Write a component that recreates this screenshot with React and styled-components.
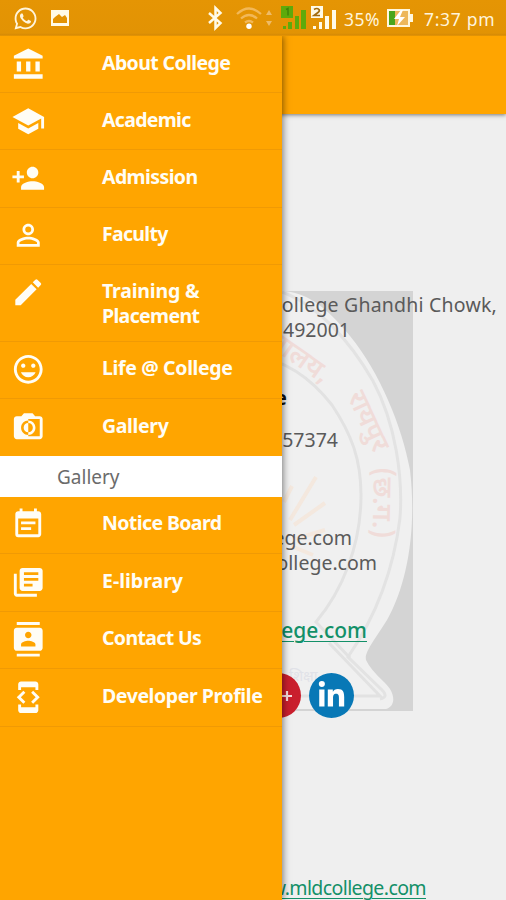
import React from 'react'
import styled, { createGlobalStyle } from 'styled-components'
import {
  MdAccountBalance, MdSchool, MdPersonAdd, MdPersonOutline, MdEdit, MdTagFaces,
  MdMonochromePhotos, MdEventNote, MdLibraryBooks, MdContacts, MdDeveloperMode,
} from 'react-icons/md'
import { FaWhatsapp, FaLinkedinIn } from 'react-icons/fa'

const GlobalStyle = createGlobalStyle`
    * {
        box-sizing: border-box;
    }

    body {
        margin: 0;
        background: #efefef;
        font-family: "Noto Sans", "Open Sans", sans-serif;
    }
`

const Screen = styled.div`
    position: relative;
    width: 506px;
    height: 900px;
    overflow: hidden;
    background: #efefef;
`

const StatusBar = styled.div`
    position: relative;
    z-index: 3;
    height: 36px;
    display: flex;
    justify-content: space-between;
    background: linear-gradient(#e59504 0, #e29304 33px, #d58a06 35px, #ee9b02 36px);
    color: #fff4dc;
`

const Notifications = styled.div`
    display: flex;
    align-items: center;
    gap: 12px;
    padding-left: 13px;
`

const StatusIcons = styled.svg`
    display: block;
    width: 140px;
    height: 36px;
`

const StatusRight = styled.div`
    display: flex;
    align-items: center;
    padding-right: 9px;
    line-height: 36px;
`

const StatusText = styled.span`
    font-size: 17.5px;
    width: ${(props) => props.$width}px;
    margin-left: ${(props) => props.$left || 0}px;
    letter-spacing: ${(props) => props.$spacing || 0}px;
    white-space: nowrap;
    padding-top: 2px;
`

const Drawer = styled.nav`
    position: absolute;
    z-index: 2;
    top: 36px;
    left: 0;
    width: 282px;
    height: 864px;
    background: #ffa500;
    box-shadow: 1px 0 7px rgba(0, 0, 0, 0.5);
`

const MenuItem = styled.div`
    display: flex;
    align-items: flex-start;
    height: ${(props) => props.$height || 57.2}px;
    padding: 10.5px 0 0 11px;
    border-bottom: ${(props) => (props.$open ? 'none' : '1px solid #f09a04')};
    color: #fffdf5;

    svg {
        flex: none;
        width: 34.5px;
        height: 34.5px;
    }
`

const MenuLabel = styled.span`
    margin: 3.2px 0 0 56.5px;
    font-size: 19.5px;
    font-weight: 700;
    line-height: 25px;
    white-space: nowrap;
`

const LabelLine = styled.span`
    display: block;
    letter-spacing: ${(props) => props.$spacing}px;
`

const SubItem = styled.div`
    height: 40.5px;
    padding: 1px 0 0 57px;
    background: #fff;
    color: #6b6b6b;
    font-size: 19px;
    line-height: 40px;
`

const AppBar = styled.header`
    position: relative;
    height: 78px;
    background: #ffa500;
    box-shadow: 0 1px 4px rgba(0, 0, 0, 0.5);
`

const Watermark = styled.svg`
    position: absolute;
    left: 240px;
    top: 291px;
`

const Contact = styled.main`
    position: relative;
    display: flex;
    flex-direction: column;
    height: 786px;
    padding-top: 178px;
`

const Line = styled.div`
    width: ${(props) => props.$end}px;
    margin-top: ${(props) => props.$gap || 0}px;
    text-align: right;
    white-space: nowrap;
    font-size: 19.5px;
    line-height: 25px;
    font-weight: ${(props) => (props.$bold ? 700 : 400)};
    color: ${(props) => (props.$bold ? '#111' : '#5a5a5a')};
    letter-spacing: ${(props) => props.$spacing || 0}px;
`

const SiteLink = styled.a`
    color: #139068;
    font-weight: ${(props) => (props.$strong ? 500 : 400)};
    font-size: ${(props) => props.$size}px;
    text-decoration: underline;
    text-decoration-thickness: 1px;
    text-underline-offset: 3px;
`

const SocialRow = styled.div`
    display: flex;
    gap: 8px;
    margin-top: 30px;
    padding-left: 256px;
`

const SocialButton = styled.div`
    display: flex;
    align-items: center;
    justify-content: ${(props) => props.$justify || 'center'};
    width: 45px;
    height: 45px;
    padding-right: ${(props) => (props.$justify ? 8 : 0)}px;
    border-radius: 50%;
    background: ${(props) => props.$color};
    color: #fff;
`

const menu = [
  { icon: MdAccountBalance, label: [['About College', -0.6]] },
  { icon: MdSchool, label: [['Academic', -0.7]] },
  { icon: MdPersonAdd, label: [['Admission', -0.6]] },
  { icon: MdPersonOutline, label: [['Faculty', -0.7]] },
  { icon: MdEdit, label: [['Training &', -0.2], ['Placement', -0.65]], height: 77 },
  { icon: MdTagFaces, label: [['Life @ College', -0.35]] },
  { icon: MdMonochromePhotos, label: [['Gallery', -0.35]], children: ['Gallery'] },
  { icon: MdEventNote, label: [['Notice Board', -0.6]], height: 57.5 },
  { icon: MdLibraryBooks, label: [['E-library', 0]], height: 57.5 },
  { icon: MdContacts, label: [['Contact Us', -0.65]], height: 57.5 },
  { icon: MdDeveloperMode, label: [['Developer Profile', -0.42]], height: 57.5 },
]

const PictureIcon = () => (
  <svg width="20" height="16" viewBox="0 0 20 16">
    <path fillRule="evenodd" fill="#fffbe8" d="M1 0h18v16H1zM3 13h14V8l-2-3-3 2-3-3-4 3-2 2z" />
  </svg>
)

const SystemIcons = () => (
  <StatusIcons viewBox="202 0 140 36">
    <path d="M209 13l11.500 10-5 5V8l5 5-11.500 10" fill="none" stroke="#fffbe8" strokeWidth="2.500" />
    <g fill="none" stroke="#f2b858" strokeWidth="2.300">
      <path d="M237 14q12-11 24 0M241 18.500q8-7 16 0M245 22.500q4-3 8 0" />
    </g>
    <circle cx="249" cy="26.300" r="2.700" fill="#fff" />
    <path d="M266 15l3-5 3 5zM266 21l3 5 3-5z" fill="#eebb67" />
    <path d="M281 6h12v12h-12zM283 26h3v3h-3zM288 22h4v7h-4zM295 16h4v13h-4zM301 10h5v19h-5z" fill="#5eaa0b" />
    <path d="M286 9.500l2-1v7" stroke="#418409" strokeWidth="1.500" fill="none" />
    <path d="M311 6h12v12h-12zM313 26h3v3h-3zM319 22h3v7h-3zM325 16h4v13h-4zM332 10h4v19h-4z" fill="#fffbe8" />
    <path d="M314 9.500q3-2 5 0 1 1.500-1 3l-4 3h6" stroke="#a36d10" strokeWidth="1.700" fill="none" />
  </StatusIcons>
)

const Battery = () => (
  <svg width="28" height="20" viewBox="0 0 28 20">
    <path d="M1 1h23v5h3v8h-3v5H1z" fill="#fff7dd" />
    <path d="M3 3h6v14H3z" fill="#49a51a" />
    <path d="M9 3h13v14H9z" fill="#edb75b" />
    <path d="M15 2L8 11h5l-2 7 8-9h-5l3-7z" fill="#fff" />
  </svg>
)

const Plus = () => (
  <svg width="12" height="12" viewBox="0 0 12 12">
    <path d="M6 1v10M1 6h10" stroke="#f6dcdc" strokeWidth="2.200" />
  </svg>
)

const Seal = () => (
  <Watermark width="173" height="420" viewBox="240 291 173 420">
    <path d="M240 291h173v420H240z" fill="#d4d4d4" />
    <path
      d="M240 291h45C310 294 328 309 350 336C380 373 402 426 410 470C417 530 407 585 387 620C376 638 364 652 366 660Q370 669 384 682C396 693 396 706 386 709H240z"
      fill="#f0f0f0"
    />
    <path
      d="M282 292C318 305 350 341 373 381C396 424 403 478 400 518C393 575 372 622 348 657L382 690Q389 697 380 699"
      fill="none" stroke="#e3e3e3" strokeWidth="3"
    />
    <path
      d="M240 355C282 355 311 378 332 405C352 435 361 460 361 495C361 546 342 591 316 622L350 658M329 643L380 696H282"
      fill="none" stroke="#e2e2e2" strokeWidth="3"
    />
    <path d="M284 502l8-16M290 520l26-43M294 525l31-22M295 539l30-9M291 546l22 9" stroke="#f4e8de" strokeWidth="4" />
    <g fill="#f0dcd9" fontSize="27" fontWeight="600" fontFamily='"Noto Sans Devanagari", "Noto Sans", sans-serif'>
      <text transform="translate(267 345) rotate(35)">यालय,</text>
      <text transform="translate(347 396) rotate(65)">रायपुर</text>
      <text transform="translate(374 467) rotate(91)">(छ.ग.)</text>
    </g>
    <text x="289" y="681" fill="#e1e2e8" fontSize="15">शिक्षा</text>
  </Watermark>
)

const App = () => {
  return (
    <Screen>
      <GlobalStyle />
      <StatusBar>
        <Notifications>
          <FaWhatsapp size={25} />
          <PictureIcon />
        </Notifications>
        <StatusRight>
          <SystemIcons />
          <StatusText $width={42} $left={2} $spacing={0.5}>35%</StatusText>
          <Battery />
          <StatusText $width={73} $left={10} $spacing={0.7}>7:37 pm</StatusText>
        </StatusRight>
      </StatusBar>

      <Drawer>
        {menu.map(({ icon: Icon, label, height, children }) => (
          <React.Fragment key={label[0][0]}>
            <MenuItem $height={height} $open={Boolean(children)}>
              <Icon />
              <MenuLabel>
                {label.map(([text, spacing]) => <LabelLine key={text} $spacing={spacing}>{text}</LabelLine>)}
              </MenuLabel>
            </MenuItem>
            {children && children.map((child) => <SubItem key={child}>{child}</SubItem>)}
          </React.Fragment>
        ))}
      </Drawer>

      <Seal />
      <AppBar />
      <Contact>
        <Line $end={497} $spacing={0.2}>ollege Ghandhi Chowk,</Line>
        <Line $end={350}>492001</Line>
        <Line $end={287} $gap={43} $bold>e</Line>
        <Line $end={338} $gap={17}>57374</Line>
        <Line $end={352} $gap={73}>ege.com</Line>
        <Line $end={377}>ollege.com</Line>
        <Line $end={367} $gap={43}><SiteLink $size={21} $strong>ege.com</SiteLink></Line>
        <SocialRow>
          <SocialButton $color="#c91f2d" $justify="flex-end"><Plus /></SocialButton>
          <SocialButton $color="#0878b6"><FaLinkedinIn size={29} /></SocialButton>
        </SocialRow>
        <Line $end={426} $gap={157} $spacing={-0.6}><SiteLink $size={19.5}>w.mldcollege.com</SiteLink></Line>
      </Contact>
    </Screen>
  )
}

export default App
